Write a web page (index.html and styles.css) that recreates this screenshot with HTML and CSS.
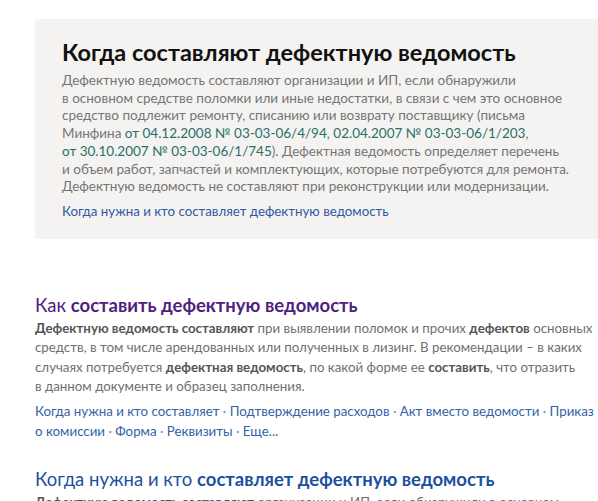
FILE: index.html
```html
<!DOCTYPE html>
<html lang="ru">
<head>
<meta charset="utf-8">
<link rel="stylesheet" href="styles.css">
</head>
<body>
<div class="page">
  <section class="answer">
    <h2 class="answer-title">Когда составляют дефектную ведомость</h2>
    <p class="answer-text">Дефектную ведомость составляют организации и ИП, если обнаружили<br>в основном средстве поломки или иные недостатки, в связи с чем это основное<br>средство подлежит ремонту, списанию или возврату поставщику (письма<br>Минфина <span class="ref">от 04.12.2008 № 03-03-06/4/94</span>, <span class="ref">02.04.2007 № 03-03-06/1/203</span>,<br><span class="ref">от 30.10.2007 № 03-03-06/1/745</span>). Дефектная ведомость определяет перечень<br>и объем работ, запчастей и комплектующих, которые потребуются для ремонта.<br>Дефектную ведомость не составляют при реконструкции или модернизации.</p>
    <a class="answer-link" href="#">Когда нужна и кто составляет дефектную ведомость</a>
  </section>

  <article class="result">
    <h3 class="result-title visited"><a href="#">Как <b>составить дефектную ведомость</b></a></h3>
    <p class="snippet"><b>Дефектную ведомость составляют</b> при выявлении поломок и прочих <b>дефектов</b> основных<br>средств, в том числе арендованных или полученных в лизинг. В рекомендации – в каких<br>случаях потребуется <b>дефектная ведомость</b>, по какой форме ее <b>составить</b>, что отразить<br>в данном документе и образец заполнения.</p>
    <p class="sitelinks"><a href="#">Когда нужна и кто составляет</a> · <a href="#">Подтверждение расходов</a> · <a href="#">Акт вместо ведомости</a> · <a href="#">Приказ</a><br><a href="#">о комиссии</a> · <a href="#">Форма</a> · <a href="#">Реквизиты</a> · <a href="#">Еще...</a></p>
  </article>

  <article class="result last">
    <h3 class="result-title"><a href="#">Когда нужна и кто <b>составляет дефектную ведомость</b></a></h3>
    <p class="snippet"><b>Дефектную ведомость составляют</b> организации и ИП, если обнаружили в основном<br>средстве поломки или иные недостатки.</p>
  </article>
</div>
</body>
</html>
```

FILE: styles.css
```css
html, body {
  margin: 0;
  padding: 0;
  background: #ffffff;
  overflow: hidden;
}
body {
  font-family: Lato, "Open Sans", sans-serif;
}
.page {
  padding: 19px 0 0 35px;
  width: 620px;
}
.answer {
  background: #f4f3f1;
  border-radius: 3px;
  padding: 19px 30px 19px 27px;
  margin-bottom: 54px;
}
.answer-title {
  margin: 0 0 6px;
  font-size: 23.5px;
  font-weight: 700;
  color: #111111;
  line-height: 28px;
}
.answer-text {
  margin: 0 0 6px;
  font-size: 13.5px;
  line-height: 17.7px;
  color: #757575;
}
.ref {
  color: #2a6f6b;
}
.answer-link {
  display: block;
  font-size: 13.3px;
  line-height: 18px;
  color: #2f5aa3;
  text-decoration: none;
}
.result {
  margin-bottom: 26px;
}
.result-title {
  margin: 0 0 2px;
  font-size: 18.5px;
  font-weight: 400;
  line-height: 24px;
}
.result-title a {
  color: #1d4fa0;
  text-decoration: none;
}
.result-title.visited a {
  color: #50207f;
}
.snippet {
  margin: 0;
  font-size: 13.3px;
  line-height: 19.5px;
  color: #6f6f6f;
}
.snippet b {
  color: #555555;
}
.sitelinks {
  margin: 4px 0 0;
  font-size: 13.3px;
  line-height: 20px;
  color: #8a8a8a;
  white-space: nowrap;
}
.sitelinks a {
  color: #3263a8;
  text-decoration: none;
}
```
